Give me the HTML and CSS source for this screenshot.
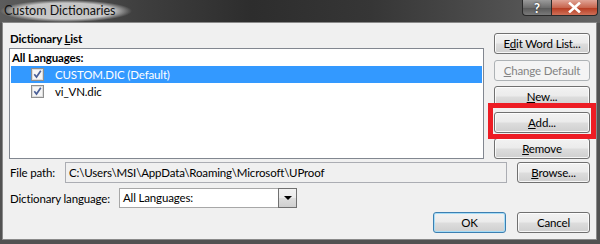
FILE: index.html
```html
<!DOCTYPE html>
<html lang="en">
<head>
<meta charset="UTF-8" />
<title>Custom Dictionaries</title>
<link rel="stylesheet" href="styles.css">
</head>
<body>
<div class="window">
  <div class="titlebar">
    <span class="title">Custom Dictionaries</span>
    <div class="caption-btns">
      <span class="cap help">?</span>
      <span class="cap close">
        <svg width="13" height="11" viewBox="0 0 13 11"><path d="M2 1.5 L11 9.5 M11 1.5 L2 9.5" stroke="#fff" stroke-width="2.6" stroke-linecap="square"/></svg>
      </span>
    </div>
  </div>

  <div class="client">
    <div class="main">
      <div class="list-area">
        <div class="group-label">Dictionary <u>L</u>ist</div>
        <div class="listbox">
          <div class="list-head">All Languages:</div>
          <div class="item selected">
            <svg class="check" width="13" height="13" viewBox="0 0 13 13">
              <rect x="0.5" y="0.5" width="12" height="12" fill="#dcdcdc" stroke="#8e8f8f"/>
              <rect x="2" y="2" width="9" height="9" fill="#f6f6f6"/>
              <path d="M3.3 6.3 L5.5 9 L9.8 2.8" fill="none" stroke="#4a5f97" stroke-width="1.7"/>
            </svg>
            CUSTOM.DIC (Default)
          </div>
          <div class="item">
            <svg class="check" width="13" height="13" viewBox="0 0 13 13">
              <rect x="0.5" y="0.5" width="12" height="12" fill="#dcdcdc" stroke="#8e8f8f"/>
              <rect x="2" y="2" width="9" height="9" fill="#f6f6f6"/>
              <path d="M3.3 6.3 L5.5 9 L9.8 2.8" fill="none" stroke="#4a5f97" stroke-width="1.7"/>
            </svg>
            vi_VN.dic
          </div>
        </div>
      </div>
      <div class="side">
        <button class="btn">E<u>d</u>it Word List...</button>
        <button class="btn" disabled><u>C</u>hange Default</button>
        <button class="btn"><u>N</u>ew...</button>
        <button class="btn"><u>A</u>dd...</button>
        <button class="btn"><u>R</u>emove</button>
      </div>
    </div>

    <div class="row path-row">
      <span class="label">File path:</span>
      <div class="textbox">C:\Users\MSI\AppData\Roaming\Microsoft\UProof</div>
      <button class="btn"><u>B</u>rowse...</button>
    </div>

    <div class="row lang-row">
      <span class="label">Dictionary language:</span>
      <div class="combo">
        <span class="combo-text">All Languages:</span>
        <span class="combo-btn"><span class="arrow"></span></span>
      </div>
    </div>

    <div class="footer">
      <button class="btn default">OK</button>
      <button class="btn">Cancel</button>
    </div>
  </div>

  <!-- annotation box drawn over the Add button -->
  <div class="highlight"></div>
</div>
</body>
</html>
```

FILE: styles.css
```css
:root {
  --dialog-bg: #f0f0f0;
  --frame: #525252;
  --select: #3399ff;
  --font: 'Segoe UI', Lato, sans-serif;
}

* {
  box-sizing: border-box;
}

body {
  margin: 0;
  background: var(--frame);
  font-family: var(--font);
  font-size: 11.5px;
  letter-spacing: -0.15px;
  color: #000;
}

.window {
  position: relative;
  width: 600px;
  height: 244px;
  overflow: hidden;
}

/* Title bar */
.titlebar {
  height: 23px;
  display: flex;
  align-items: flex-start;
  justify-content: space-between;
  background: linear-gradient(90deg, #5c5c5c 0%, #3e3e3e 24%, #2d2d2d 42%, #363636 62%, #505050 84%, #646464 100%);
}

.title {
  padding: 3px 16px 4px 4px;
  font-size: 12.5px;
  letter-spacing: 0;
  line-height: 15px;
  color: #111;
  background: radial-gradient(closest-side, rgba(205,205,205,0.95) 72%, rgba(205,205,205,0) 100%);
  white-space: nowrap;
}

.caption-btns {
  display: flex;
  margin-right: 2px;
}

.cap {
  height: 16px;
  display: flex;
  align-items: center;
  justify-content: center;
  border: 1px solid #2a2a2a;
  border-top: none;
  color: #fff;
  font-weight: bold;
  font-size: 13px;
}

.help {
  width: 29px;
  border-radius: 0 0 0 4px;
  border-right: none;
  background: linear-gradient(#9a9a9a, #6e6e6e 50%, #575757 51%, #7a7a7a);
  text-shadow: 0 0 2px #222;
}

.close {
  width: 47px;
  border-radius: 0 0 4px 0;
  background: linear-gradient(#e0a496, #c8664f 50%, #b5391f 51%, #cf7058);
}

/* Client area */
.client {
  height: 216px;
  margin: 0 4px 0 3px;
  padding: 0 0 0 6px;
  background: var(--dialog-bg);
  box-shadow: 0 0 0 1px #8a8a8a;
}

.main {
  display: flex;
  padding-top: 8px;
}

.list-area {
  width: 475px;
}

.group-label {
  height: 15px;
  padding-left: 1px;
  font-weight: bold;
  line-height: 15px;
}

.listbox {
  margin-top: 2px;
  height: 111px;
  border: 1px solid #828790;
  background: #fff;
  padding: 0 1px;
}

.list-head {
  height: 17px;
  line-height: 17px;
  padding-left: 1px;
  font-weight: bold;
}

.item {
  height: 17px;
  display: flex;
  align-items: center;
  padding-left: 20px;
}

.item .check {
  margin-right: 11px;
  flex: none;
}

.item.selected {
  background: var(--select);
  color: #fff;
}

.side {
  margin-left: 10px;
  padding-top: 2px;
  display: flex;
  flex-direction: column;
  gap: 5px;
}

.side .btn {
  width: 96px;
}

.side .btn:first-child {
  margin-bottom: 1px;
}

/* Buttons */
.btn {
  height: 21px;
  padding: 0;
  border: 1px solid #707070;
  border-radius: 3px;
  background: linear-gradient(#f2f2f2 0%, #ebebeb 48%, #dddddd 52%, #cfcfcf 100%);
  box-shadow: inset 0 0 0 1px rgba(255,255,255,0.8);
  font-family: var(--font);
  font-size: 11.5px;
  letter-spacing: -0.15px;
  color: #000;
  line-height: 18px;
  white-space: nowrap;
}

.btn:disabled {
  border-color: #adb2b5;
  background: #f4f4f4;
  color: #838383;
  box-shadow: none;
}

.btn.default {
  border-color: #3c7fb1;
  box-shadow: inset 0 0 0 1px #a6dcf6;
}

/* Rows */
.row {
  display: flex;
  align-items: center;
}

.label {
  padding-left: 1px;
  white-space: nowrap;
}

.path-row {
  margin-top: 3px;
}

.path-row .label {
  width: 56px;
}

.textbox {
  width: 442px;
  height: 21px;
  border: 1px solid #abadb3;
  padding-left: 3px;
  line-height: 19px;
  background: #f0f0f0;
  white-space: nowrap;
}

.path-row .btn {
  width: 73px;
  margin-left: 10px;
}

.lang-row {
  margin-top: 5px;
}

.lang-row .label {
  width: 110px;
}

.combo {
  width: 178px;
  height: 20px;
  display: flex;
  border: 1px solid #a7a7a7;
  background: #fff;
}

.combo-text {
  flex: 1;
  padding-left: 3px;
  line-height: 18px;
}

.combo-btn {
  width: 19px;
  display: flex;
  align-items: center;
  justify-content: center;
  border: 1px solid #707070;
  margin: -1px -1px -1px 0;
  background: linear-gradient(#f2f2f2, #ebebeb 48%, #dddddd 52%, #cfcfcf);
}

.arrow {
  width: 0;
  height: 0;
  border-left: 4px solid transparent;
  border-right: 4px solid transparent;
  border-top: 4px solid #000;
}

.footer {
  margin-top: 4px;
  display: flex;
  justify-content: flex-end;
  gap: 11px;
  padding-right: 6px;
}

.footer .btn {
  width: 73px;
}

/* red annotation rectangle */
.highlight {
  position: absolute;
  left: 488px;
  top: 103px;
  width: 108px;
  height: 36px;
  border: 5px solid #ed1c24;
}
```
